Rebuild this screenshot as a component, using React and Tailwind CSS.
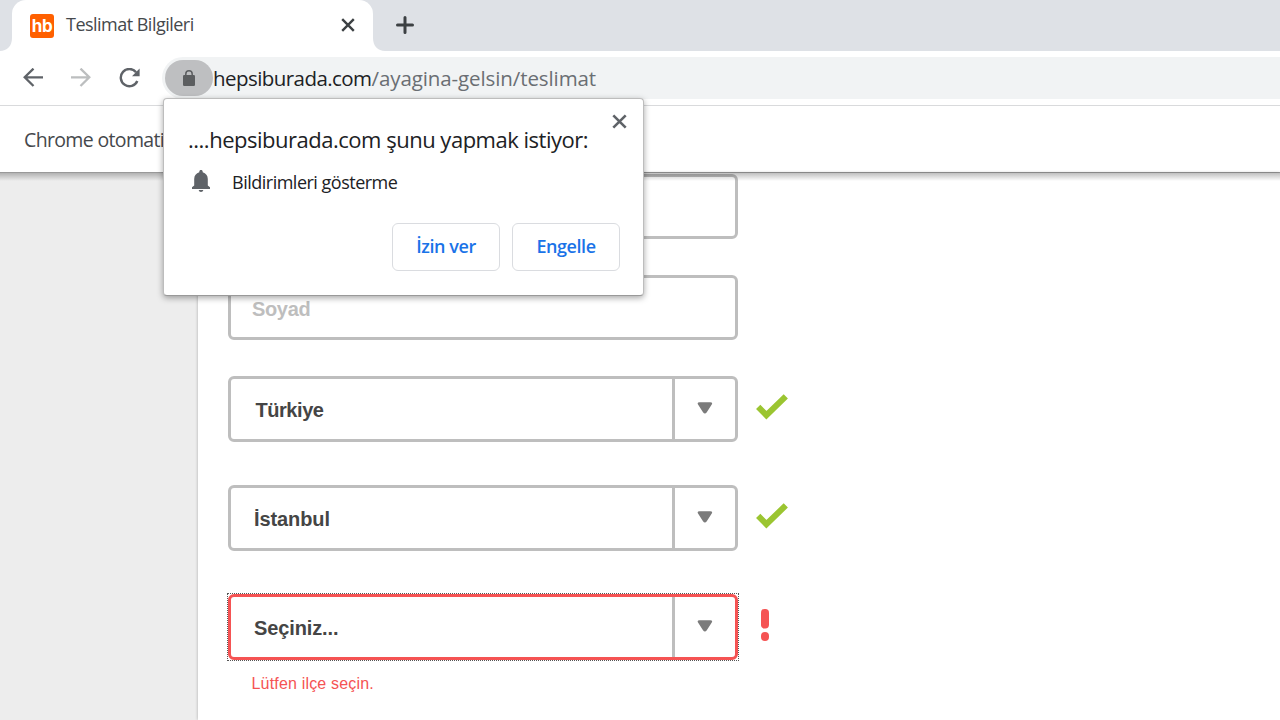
import React from "react";

function TabStrip() {
  return (
    <div className="flex h-[51px] shrink-0 bg-[#dee1e6]">
      <svg className="h-[51px] w-3 shrink-0" viewBox="0 0 12 51">
        <path d="M12 38V51H0C7 51 12 46 12 38Z" fill="#fff" />
      </svg>
      <div className="flex h-[51px] w-[360.5px] items-center rounded-t-[14px] bg-white pl-[18px] pr-[17.5px]">
        <div className="flex size-6 items-center justify-center rounded-[3px] bg-[#ff6000] font-['Inter',sans-serif] text-[17px] font-bold leading-none tracking-[-0.5px] text-white">
          <span className="-mb-px">hb</span>
        </div>
        <span className="-mt-[3px] ml-3 whitespace-nowrap font-['Open_Sans',sans-serif] text-[18px] leading-6 tracking-[-0.52px] text-[#45484c]">
          Teslimat Bilgileri
        </span>
        <svg className="-mt-px ml-auto size-[14px]" viewBox="0 0 14 14" fill="none" stroke="#3c4043" strokeWidth="2.4">
          <path d="M1.2 1.2 12.8 12.8M12.8 1.2 1.2 12.8" />
        </svg>
      </div>
      <svg className="h-[51px] w-3 shrink-0" viewBox="0 0 12 51">
        <path d="M0 38V51H12C5 51 0 46 0 38Z" fill="#fff" />
      </svg>
      <svg className="ml-[11.5px] mt-[16px] size-[18px]" viewBox="0 0 18 18" fill="none" stroke="#3c4043" strokeWidth="3" strokeLinecap="round">
        <path d="M9 1.5V16.5M1.5 9H16.5" />
      </svg>
    </div>
  );
}

function Toolbar() {
  return (
    <div className="flex h-[55px] shrink-0 border-b border-[#d9dadc] bg-white pt-[6px]">
      <div className="flex h-[42px] w-[162px] shrink-0 items-center pl-[23px]">
        <svg className="size-5" viewBox="0 0 20 20" fill="none" stroke="#5f6368" strokeWidth="2.3">
          <path d="M20 9.3H2M10.5 0.6 1.7 9.3 10.5 18" />
        </svg>
        <svg className="ml-7 size-5" viewBox="0 0 20 20" fill="none" stroke="#bcbebf" strokeWidth="2.3">
          <path d="M0 9.3H18M9.5 0.6 18.3 9.3 9.5 18" />
        </svg>
        <svg className="ml-7 size-[21px]" viewBox="0 0 21 21" fill="none">
          <path d="M17.1 4.2A8.6 8.6 0 1 0 18.3 13" stroke="#5f6368" strokeWidth="2.4" />
          <path d="M20.6 0.6V8.3H13Z" fill="#5f6368" />
        </svg>
      </div>
      <div className="flex h-[42px] flex-1 items-center rounded-l-full bg-[#f1f3f4] pl-[3px]">
        <div className="flex h-9 w-12 shrink-0 items-center justify-center rounded-[18px] bg-[#bebfc1]">
          <svg className="h-4 w-3" viewBox="0 0 12 16" fill="none">
            <rect y="5" width="12" height="11" rx="1.2" fill="#5c5e60" />
            <path d="M2.8 6V4a3.2 3.2 0 0 1 6.4 0V6" stroke="#5c5e60" strokeWidth="1.5" />
          </svg>
        </div>
        <div className="whitespace-nowrap font-['Open_Sans',sans-serif] text-[20.5px] leading-7 tracking-[-0.56px] text-[#202124]">
          hepsiburada.com<span className="tracking-[-0.1px] text-[#6a6e73]">/ayagina-gelsin/teslimat</span>
        </div>
      </div>
    </div>
  );
}

function Arrow() {
  return (
    <svg className="h-[12px] w-[16px]" viewBox="0 0 16 12">
      <path d="M2.6 0.2H13.2Q16.2 0.2 14.6 2.7L9.8 10.2Q7.9 13 6 10.2L1.2 2.7Q-0.4 0.2 2.6 0.2Z" fill="#7b7b7b" />
    </svg>
  );
}

function Check() {
  return (
    <svg className="ml-[18px] h-[27px] w-8" viewBox="0 0 32 27" fill="none">
      <path d="M2.2 12.8 10.4 21.2 29.8 2.4" stroke="#9bc531" strokeWidth="6" />
    </svg>
  );
}

function Warning() {
  return (
    <svg className="ml-[23px] h-8 w-2" viewBox="0 0 8 32">
      <rect width="8" height="19.5" rx="3.7" fill="#f55353" />
      <rect y="23" width="8" height="9" rx="4" fill="#f55353" />
    </svg>
  );
}

function SelectRow({ label, invalid, inset }) {
  return (
    <div className="flex h-[66px] items-center">
      <div
        className={
          "flex h-[66px] w-[510px] shrink-0 rounded-md border-[3px] " +
          (invalid ? "border-[#f55353]" : "border-[#bebebe]")
        }
      >
        <div className={"flex flex-1 items-center whitespace-nowrap pt-0.5 text-[20px] font-bold text-[#454545] " + inset}>
          {label}
        </div>
        <div className="flex w-[63px] items-center justify-center border-l-[3px] border-[#bebebe] pb-0.5">
          <Arrow />
        </div>
      </div>
      <div className={"shrink-0 " + (invalid ? "pb-[5px]" : "pb-[3px]")}>{invalid ? <Warning /> : <Check />}</div>
    </div>
  );
}

function DeliveryForm() {
  return (
    <main className="relative flex min-h-0 flex-1 bg-[#ededed] font-['Liberation_Sans',Arial,sans-serif]">
      <div className="ml-[198px] flex-1 bg-white pl-[30px] pt-px shadow-[0_0_3px_rgba(0,0,0,0.28)]">
        <div className="h-[65px] w-[510px] rounded-md border-[3px] border-[#bebebe]" />
        <div className="mt-9 flex h-[65px] w-[510px] items-center rounded-md border-[3px] border-[#bebebe] pl-[21px] pt-0.5 text-[20px] font-bold tracking-[-0.35px] text-[#bebebe]">
          Soyad
        </div>
        <div className="mt-9">
          <SelectRow label="Türkiye" inset="pl-[24.5px] tracking-[-0.45px]" />
        </div>
        <div className="mt-[43px]">
          <SelectRow label="İstanbul" inset="pl-[23px] tracking-[-0.1px]" />
        </div>
        <div className="mt-[43px] w-[510px] outline-1 outline-dotted outline-[#555]">
          <SelectRow label="Seçiniz..." invalid inset="pl-[23px] tracking-[-0.12px]" />
        </div>
        <p className="mt-[13px] pl-[23.5px] text-[16px] leading-[22px] tracking-[0.18px] text-[#f55353]">Lütfen ilçe seçin.</p>
      </div>
      <div className="absolute inset-x-0 top-0 h-[8px] bg-gradient-to-b from-black/25 to-transparent" />
    </main>
  );
}

function PermissionPrompt() {
  return (
    <div className="absolute left-[163px] top-[98px] h-[198px] w-[481px] rounded-[4px] border border-[#bdbdbd] border-b-[#999] bg-white font-['Open_Sans',sans-serif] shadow-[0_2px_6px_rgba(0,0,0,0.35)]">
      <div className="flex items-start justify-between pl-6 pr-4 pt-[15px]">
        <h1 className="mt-[10px] whitespace-nowrap pb-px text-[22px] leading-[30px] tracking-[-0.49px] text-[#202124]">
          ....hepsiburada.com şunu yapmak istiyor:
        </h1>
        <svg className="size-[15px]" viewBox="0 0 15 15" fill="none" stroke="#5f6368" strokeWidth="2.6">
          <path d="M1.3 1.3 13.7 13.7M13.7 1.3 1.3 13.7" />
        </svg>
      </div>
      <div className="mt-[14px] flex h-[26px] items-center pl-7">
        <svg className="-mt-0.5 h-[22px] w-[18px]" viewBox="0 0 18 22" fill="#5f6368">
          <path d="M9 0C10 0 10.7 .7 10.7 1.7V2.2C13.8 3 15.8 5.5 15.8 9V15.5L18 17.3V19H0V17.3L2.2 15.5V9C2.2 5.5 4.2 3 7.3 2.2V1.7C7.3 .7 8 0 9 0ZM6.7 20H11.3C11.1 21.3 10.2 22 9 22S6.9 21.3 6.7 20Z" />
        </svg>
        <span className="ml-[22px] whitespace-nowrap text-[18px] tracking-[-0.5px] text-[#202124]">Bildirimleri gösterme</span>
      </div>
      <div className="mt-[28px] flex justify-end gap-3 pr-[23px] text-[18px] font-semibold leading-6 tracking-[-0.43px] text-[#1a73e8]">
        <button className="h-12 w-[108px] whitespace-nowrap rounded-md border border-[#dadce0] pb-0.5">İzin ver</button>
        <button className="h-12 w-[108px] whitespace-nowrap rounded-md border border-[#dadce0] pb-0.5">Engelle</button>
      </div>
    </div>
  );
}

export default function App() {
  return (
    <div className="relative flex h-[720px] w-[1280px] flex-col overflow-hidden bg-white">
      <TabStrip />
      <Toolbar />
      <div className="flex h-[67px] shrink-0 items-center border-b border-[#999] bg-white pl-6 pt-[2px]">
        <span className="whitespace-nowrap font-['Open_Sans',sans-serif] text-[19.5px] leading-7 tracking-[-0.65px] text-[#45484c]">
          Chrome otomati
        </span>
      </div>
      <DeliveryForm />
      <PermissionPrompt />
    </div>
  );
}
